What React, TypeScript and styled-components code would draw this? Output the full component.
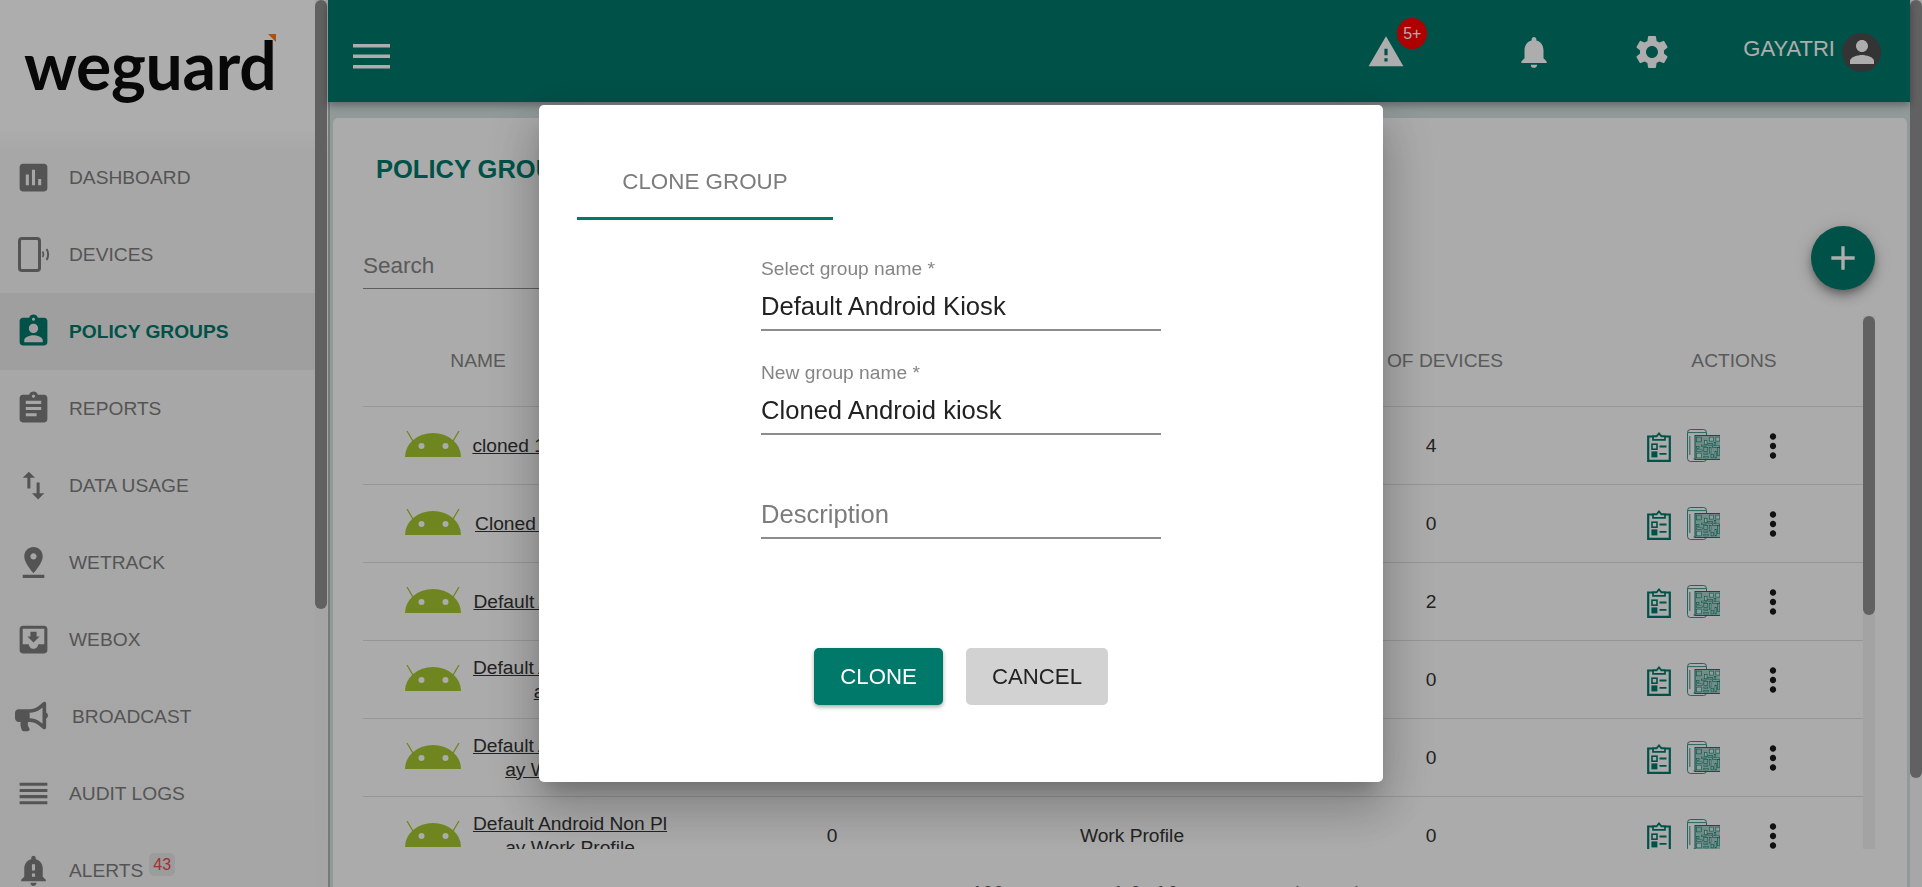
import React from "react";
import styled, { createGlobalStyle } from "styled-components";
import {
  MdAssessment, MdAssignmentInd, MdAssignment, MdImportExport, MdPinDrop, MdMoveToInbox,
  MdReorder, MdNotificationImportant, MdWarning, MdNotifications, MdSettings, MdPerson,
  MdAdd, MdMoreVert, MdChevronLeft, MdChevronRight,
} from "react-icons/md";
import { FaBullhorn } from "react-icons/fa";

const TEAL = "#00796b";

const Global = createGlobalStyle`
  html, body { margin: 0; padding: 0; height: 887px; overflow: hidden; background: #fff; }
  * { box-sizing: border-box; }
  body { font-family: "Liberation Sans", Arial, sans-serif; }
`;

const Page = styled.div`display: flex; width: 1922px; height: 887px; overflow: hidden;`;

const Sidebar = styled.aside`
  width: 328px; flex: none; display: flex; height: 887px;
  background: linear-gradient(#ffffff 0, #ffffff 130px, #f7f7f7 150px, #f5f5f5 100%);
`;
const SideColumn = styled.div`width: 315px; flex: none; display: flex; flex-direction: column; overflow: hidden;`;
const LogoBox = styled.div`height: 139px; flex: none; padding: 19px 0 0 24px;`;
const LogoMark = styled.div`
  position: relative; display: inline-block; font-family: Lato, sans-serif; font-weight: 700;
  font-size: 66px; line-height: 92px; color: #0d0d0d; letter-spacing: -0.3px;
`;
const LogoTip = styled.svg`position: absolute; right: 0px; top: 15px; width: 8px; height: 8px;`;

const NavItem = styled.div<{ $active?: boolean; $gap?: number }>`
  height: 77px; flex: none; display: flex; align-items: center; padding-left: 15px;
  gap: ${(p) => p.$gap ?? 17}px; font-size: 19.2px;
  background: ${(p) => (p.$active ? "#ebebeb" : "transparent")};
  color: ${(p) => (p.$active ? TEAL : "#7d7d7d")};
  font-weight: ${(p) => (p.$active ? 700 : 400)};
  svg { flex: none; }
`;
const NavLabel = styled.span`position: relative; display: block;`;
const NavBadge = styled.span`
  position: absolute; left: 100%; top: -7px; margin-left: 6px; padding: 1px 4px; border-radius: 5px;
  background: #e6e6e6; color: #e64a4a; font-size: 16px; line-height: 21px;
`;

const Track = styled.div<{ $w?: number; $bg?: string }>`
  width: ${(p) => p.$w ?? 12}px; flex: none; background: ${(p) => p.$bg ?? "#f4f4f4"};
`;
const Thumb = styled.div<{ $top: number; $h: number }>`
  margin-top: ${(p) => p.$top}px; height: ${(p) => p.$h}px; border-radius: 6px; background: #909090;
`;

const Right = styled.div`flex: 1; display: flex; min-width: 0;`;
const MainColumn = styled.div`
  flex: 1; display: flex; flex-direction: column; min-width: 0; background: #d5e3e0;
  border-left: 2px solid #a9b9b4; 
`;
const TopBar = styled.header`
  height: 102px; flex: none; background: ${TEAL}; margin-left: -2px; display: flex; align-items: center;
  color: #fff; box-shadow: 0 3px 8px rgba(0,0,0,.35); position: relative; z-index: 1;
`;
const Burger = styled.svg`margin: 10px 0 0 25px; width: 37px; height: 30px; flex: none;`;
const TopIcons = styled.div`margin-left: auto; display: flex; align-items: center; height: 100%;`;
const TopIconSlot = styled.span<{ $w: number; $ml?: number }>`
  position: relative; display: flex; justify-content: center; width: ${(p) => p.$w}px; margin-top: 2px;
  margin-left: ${(p) => p.$ml ?? 0}px;
`;
const AlertBadge = styled.span`
  position: absolute; left: 30px; top: -15px; width: 30px; height: 31px; border-radius: 50%;
  background: #ff0000; font-size: 16px; line-height: 31px; text-align: center; color: #fff;
`;
const UserName = styled.span`font-size: 22px; margin: -4px 7px 0 71px;`;
const Avatar = styled.span`
  width: 39px; height: 39px; border-radius: 50%; background: #4d4d4d; margin-right: 29px;
  display: flex; align-items: center; justify-content: center; overflow: hidden; margin-top: 2px;
`;

const Content = styled.main`flex: 1; padding: 16px 3px 0 3px; min-height: 0;`;
const Card = styled.section`
  position: relative; height: 100%; background: #fcfcfc; border-radius: 5px 5px 0 0;
  display: flex; flex-direction: column; overflow: hidden;
`;
const Title = styled.h1`
  flex: none; margin: 34px 0 0 43px; font-size: 25.5px; line-height: 34px; font-weight: 700; color: ${TEAL};
`;
const SearchBox = styled.div`
  flex: none; margin: 62px 0 0 30px; width: 300px; height: 41px; border-bottom: 1px solid #8a8a8a;
  font-size: 22.5px; line-height: 36px; color: #858585; 
`;
const Fab = styled.button`
  position: absolute; left: 1478px; top: 108px; width: 64px; height: 64px; border: 0; border-radius: 50%;
  background: ${TEAL}; color: #fff; padding: 0; display: flex; align-items: center; justify-content: center;
  box-shadow: 0 4px 6px -1px rgba(0,0,0,.25), 0 7px 12px 1px rgba(0,0,0,.16), 0 2px 18px 1px rgba(0,0,0,.12);
`;
const TableWrap = styled.div`
  margin: 27px 0 0 30px; width: 1512px; height: 533px; flex: none; display: flex;
`;
const TableClip = styled.div`flex: 1; overflow: hidden; min-width: 0;`;
const grid = `display: grid; grid-template-columns: 310px 318px 282px 316px 274px; align-items: center;`;
const HeadRow = styled.div`
  ${grid}; height: 91px; border-bottom: 1px solid #dedede; font-size: 19.2px; color: #858585;
`;
const HeadCell = styled.div<{ $pad?: number; $padR?: number; $w?: number }>`
  text-align: center; padding-left: ${(p) => p.$pad ?? 0}px; padding-right: ${(p) => p.$padR ?? 0}px;
  ${(p) => (p.$w ? `width: ${p.$w}px;` : "")}
`;
const Row = styled.div`
  ${grid}; height: 78px; border-bottom: 1px solid #dedede; font-size: 19.2px; color: #333; flex: none;
`;
const NameCell = styled.div`display: flex; align-items: center; padding-left: 42px; gap: 10px;`;
const AndroidIcon = styled.svg`width: 56px; height: 28px; flex: none; margin-top: -2px;`;
const NameLink = styled.a`
  width: 198px; flex: none; text-align: center; text-decoration: underline; line-height: 24px;
  word-break: break-all; color: #333;
`;
const ValueCell = styled.div`text-align: center;`;
const ActionCell = styled.div`display: flex; align-items: center; padding-left: 58px;`;
const ClipIcon = styled.svg`width: 24px; height: 30px; flex: none; margin-top: 2px;`;
const QrIcon = styled.svg`width: 33px; height: 33px; flex: none; margin: 0 0 0 16px;`;
const Dots = styled.span`display: flex; margin-left: 34px; color: #1a1a1a; margin-top: 1px;`;

const Footer = styled.div`
  flex: none; margin-top: 29px; display: flex; align-items: center; height: 30px; font-size: 19.2px; color: #555;
  padding-left: 460px;
`;
const FooterText = styled.span<{ $ml?: number }>`margin-left: ${(p) => p.$ml ?? 0}px;`;
const FooterArrow = styled.span<{ $ml?: number }>`display: flex; margin-left: ${(p) => p.$ml ?? 0}px; color: #888;`;

const Backdrop = styled.div`
  position: fixed; inset: 0; background: rgba(0,0,0,.32); display: flex; justify-content: center;
  align-items: flex-start; z-index: 10;
`;
const Dialog = styled.div`
  margin-top: 105px; width: 844px; height: 677px; background: #fff; border-radius: 5px; display: flex;
  flex-direction: column;
  box-shadow: 0 13px 18px -8px rgba(0,0,0,.2), 0 29px 46px 4px rgba(0,0,0,.14), 0 11px 55px 10px rgba(0,0,0,.12);
`;
const TabHead = styled.div`
  margin: 40px 0 0 38px; width: 256px; height: 75px; flex: none; border-bottom: 3px solid ${TEAL};
  display: flex; justify-content: center; padding-top: 20px; font-size: 22.4px; line-height: 34px; color: #7c7c7c;
`;
const Form = styled.div`width: 400px; margin: 7px auto 0; flex: none;`;
const Field = styled.div`
  height: 104px; display: flex; flex-direction: column; justify-content: flex-end;
  border-bottom: 2px solid #8c8c8c; padding-bottom: 3px;
`;
const FieldLabel = styled.label`font-size: 19.2px; line-height: 24px; color: #858585; margin-bottom: 5px;`;
const FieldValue = styled.div<{ $empty?: boolean }>`
  font-size: 25.6px; line-height: 40px; color: ${(p) => (p.$empty ? "#7c7c7c" : "#222")};
`;
const Buttons = styled.div`display: flex; justify-content: center; gap: 23px; margin-top: 109px;`;
const ActionButton = styled.button<{ $primary?: boolean }>`
  height: 57px; width: ${(p) => (p.$primary ? 129 : 142)}px; border: 0; border-radius: 5px;
  font-family: inherit; font-size: 22.2px; padding: 0;
  background: ${(p) => (p.$primary ? TEAL : "#d2d2d2")}; color: ${(p) => (p.$primary ? "#fff" : "#222")};
  box-shadow: ${(p) => (p.$primary ? "0 2px 4px rgba(0,0,0,.35)" : "none")};
`;

const PhoneRing = () => (
  <svg width="37" height="37" viewBox="0 0 37 37">
    <rect x="4.5" y="2.5" width="20" height="32" rx="2.5" fill="none" stroke="currentColor" strokeWidth="3" />
    <path d="M27.5 15.5c1 1.6 1 4 0 5.5" fill="none" stroke="currentColor" strokeWidth="1.7" />
    <path d="M31.5 13c2.2 3 2.2 8 0 11" fill="none" stroke="currentColor" strokeWidth="2" />
  </svg>
);

const Android = () => (
  <AndroidIcon viewBox="0 0 56 28">
    <path d="M0 26A28 24 0 0 1 56 26z" fill="#a4c430" />
    <path d="M2 0l6.5 11M54 0l-6.5 11" stroke="#a4c430" strokeWidth="1.3" />
    <circle cx="16.5" cy="15" r="3" fill="#fcfcfc" />
    <circle cx="40.5" cy="15" r="3" fill="#fcfcfc" />
  </AndroidIcon>
);

const Checklist = () => (
  <ClipIcon viewBox="0 0 24 30">
    <path d="M1.2 4.5h21.6v24.3H1.2z" fill="none" stroke={TEAL} strokeWidth="2.2" />
    <path d="M6 7.8V4.4h3.6L12 1.4l2.4 3H18v3.4z" fill="#fcfcfc" stroke={TEAL} strokeWidth="1.7" />
    <rect x="5" y="12.2" width="5" height="5" fill="none" stroke={TEAL} strokeWidth="1.6" />
    <rect x="4.4" y="19.4" width="6" height="6" fill={TEAL} />
    <path d="M12.5 14.5h7M12.5 21.8h7" stroke={TEAL} strokeWidth="1.8" />
  </ClipIcon>
);

const qrCells = [
  [2,2,6,6],[18,2,5,5],[26,2,5,5],[2,14,3,2],[8,12,6,2],[12,6,3,5],[16,10,6,2],[24,9,2,6],[2,18,7,2],[11,15,5,5],
  [18,15,2,7],[22,13,9,2],[28,15,3,10],[2,22,6,6],[11,22,5,2],[20,24,3,4],[25,20,2,8],[11,26,6,2],
];
const QrPhone = () => (
  <QrIcon viewBox="0 0 33 33">
    <rect x="0.5" y="0.5" width="19" height="32" rx="3" fill="none" stroke={TEAL} strokeWidth=".8" />
    <path d="M1 3.6h18M2.8 7v19M6.5 30h6" stroke={TEAL} strokeWidth=".8" fill="none" />
    <g transform="translate(8,6.5) scale(.8)">
      <rect x="0" y="0" width="32" height="30" fill="#a9d0c7" stroke={TEAL} strokeWidth="1.2" />
      {qrCells.map(([x, y, w, h], i) => (
        <rect key={i} x={x} y={y} width={w} height={h} fill={i % 3 === 0 ? "none" : "#d4e8e3"} stroke={TEAL} strokeWidth=".7" />
      ))}
    </g>
  </QrIcon>
);

const nav = [
  { label: "DASHBOARD", icon: <MdAssessment size={37} /> },
  { label: "DEVICES", icon: <PhoneRing /> },
  { label: "POLICY GROUPS", icon: <MdAssignmentInd size={37} />, active: true },
  { label: "REPORTS", icon: <MdAssignment size={37} /> },
  { label: "DATA USAGE", icon: <MdImportExport size={37} /> },
  { label: "WETRACK", icon: <MdPinDrop size={37} /> },
  { label: "WEBOX", icon: <MdMoveToInbox size={37} /> },
  { label: "BROADCAST", icon: <FaBullhorn size={33} />, gap: 24 },
  { label: "AUDIT LOGS", icon: <MdReorder size={37} /> },
  { label: "ALERTS", icon: <MdNotificationImportant size={37} />, badge: "43" },
];

const rows = [
  { name: "cloned 1 Android Kiosk", a: "1", t: "Kiosk", n: "4" },
  { name: "Cloned 2 Android Kios", a: "0", t: "Kiosk", n: "0" },
  { name: "Default Android Kiosks", a: "0", t: "Kiosk", n: "2" },
  { name: "Default Android Non Play Kiosk", a: "0", t: "Kiosk", n: "0" },
  { name: "Default Android Non Play Work Profile", a: "0", t: "Work Profile", n: "0" },
  { name: "Default Android Non Play Work Profile", a: "0", t: "Work Profile", n: "0" },
];

export default function App() {
  return (
    <>
      <Global />
      <Page>
        <Sidebar>
          <SideColumn>
            <LogoBox>
              <LogoMark>
                weguard
                <LogoTip viewBox="0 0 8 8"><path d="M0 0h8v8z" fill="#ff7a12" /></LogoTip>
              </LogoMark>
            </LogoBox>
            {nav.map((n) => (
              <NavItem key={n.label} $active={n.active} $gap={n.gap}>
                {n.icon}
                <NavLabel>
                  {n.label}
                  {n.badge && <NavBadge>{n.badge}</NavBadge>}
                </NavLabel>
              </NavItem>
            ))}
          </SideColumn>
          <Track><Thumb $top={0} $h={609} /></Track>
        </Sidebar>
        <Right>
          <MainColumn>
            <TopBar>
              <Burger viewBox="0 0 37 30">
                <rect y="3" width="37" height="3.5" fill="#fff" />
                <rect y="13.5" width="37" height="3.5" fill="#fff" />
                <rect y="24" width="37" height="3.5" fill="#fff" />
              </Burger>
              <TopIcons>
                <TopIconSlot $w={38}>
                  <MdWarning size={38} />
                  <AlertBadge>5+</AlertBadge>
                </TopIconSlot>
                <TopIconSlot $w={38} $ml={110}><MdNotifications size={38} /></TopIconSlot>
                <TopIconSlot $w={40} $ml={79}><MdSettings size={40} /></TopIconSlot>
                <UserName>GAYATRI</UserName>
                <Avatar><MdPerson size={36} color="#fff" /></Avatar>
              </TopIcons>
            </TopBar>
            <Content>
              <Card>
                <Title>POLICY GROUPS</Title>
                <SearchBox>Search</SearchBox>
                <Fab><MdAdd size={40} /></Fab>
                <TableWrap>
                  <TableClip>
                    <HeadRow>
                      <HeadCell $w={230}>NAME</HeadCell>
                      <HeadCell>ACTIVE</HeadCell>
                      <HeadCell>TYPE</HeadCell>
                      <HeadCell $padR={6}>NO OF DEVICES</HeadCell>
                      <HeadCell $pad={16}>ACTIONS</HeadCell>
                    </HeadRow>
                    {rows.map((r, i) => (
                      <Row key={i}>
                        <NameCell><Android /><NameLink>{r.name}</NameLink></NameCell>
                        <ValueCell>{r.a}</ValueCell>
                        <ValueCell>{r.t}</ValueCell>
                        <ValueCell>{r.n}</ValueCell>
                        <ActionCell>
                          <Checklist />
                          <QrPhone />
                          <Dots><MdMoreVert size={38} /></Dots>
                        </ActionCell>
                      </Row>
                    ))}
                  </TableClip>
                  <Track $bg="#f1f1f1"><Thumb $top={0} $h={299} /></Track>
                </TableWrap>
                <Footer>
                  <FooterText>rows per page:</FooterText>
                  <FooterText $ml={52}>100</FooterText>
                  <FooterText $ml={109}>1-6 of 6</FooterText>
                  <FooterArrow $ml={102}><MdChevronLeft size={30} /></FooterArrow>
                  <FooterArrow $ml={34}><MdChevronRight size={30} /></FooterArrow>
                </Footer>
              </Card>
            </Content>
          </MainColumn>
          <Track $bg="#f7f7f7"><Thumb $top={0} $h={778} /></Track>
        </Right>
        <Backdrop>
          <Dialog>
            <TabHead>CLONE GROUP</TabHead>
            <Form>
              <Field>
                <FieldLabel>Select group name *</FieldLabel>
                <FieldValue>Default Android Kiosk</FieldValue>
              </Field>
              <Field>
                <FieldLabel>New group name *</FieldLabel>
                <FieldValue>Cloned Android kiosk</FieldValue>
              </Field>
              <Field>
                <FieldValue $empty>Description</FieldValue>
              </Field>
            </Form>
            <Buttons>
              <ActionButton $primary>CLONE</ActionButton>
              <ActionButton>CANCEL</ActionButton>
            </Buttons>
          </Dialog>
        </Backdrop>
      </Page>
    </>
  );
}
